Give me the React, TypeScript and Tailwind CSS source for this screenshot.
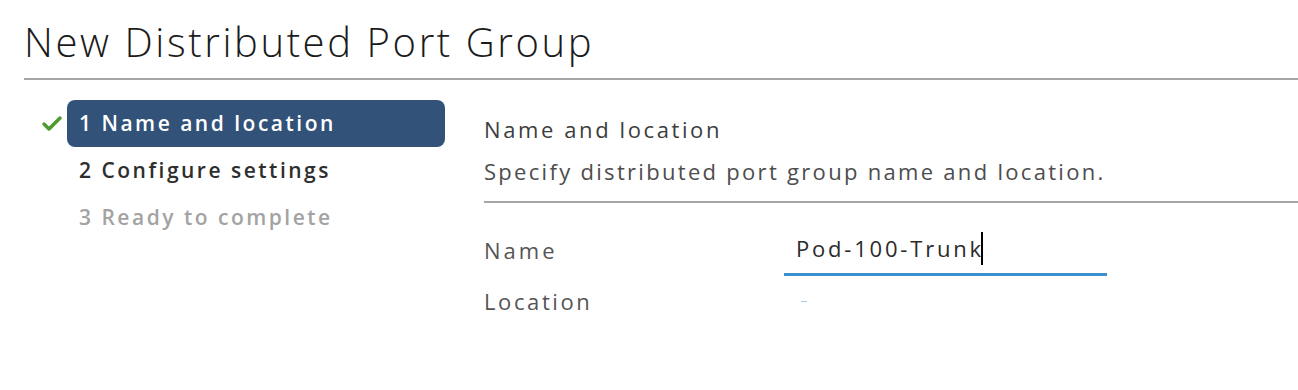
import { Check } from 'lucide-react'

const steps = [
  { label: '1 Name and location', state: 'active' },
  { label: '2 Configure settings', state: 'next' },
  { label: '3 Ready to complete', state: 'disabled' },
]

export default function App() {
  return (
    <div className="w-[1298px] h-[390px] bg-white overflow-hidden font-['Open_Sans',sans-serif]">
      <div className="ml-[24px] pt-[14px] border-b-2 border-[#a6a6a6]">
        <h1 className="text-[40px] leading-[56px] font-light tracking-[2.6px] text-[#1b1b1b] pb-[8px]">New Distributed Port Group</h1>
      </div>

      <div className="flex pt-[20px]">
        {/* wizard steps */}
        <div className="w-[484px] pl-[40px] pr-[39px]">
          {steps.map((s) => (
            <div key={s.label} className="flex items-center h-[47px]">
              <div className="w-[27px] shrink-0">
                {s.state === 'active' && <Check className="w-[24px] h-[24px] text-[#4e9a2e]" strokeWidth={3.5} />}
              </div>
              <div
                className={
                  s.state === 'active'
                    ? 'flex-1 h-[47px] flex items-center px-[12px] rounded-[8px] bg-[#325279] text-white text-[21px] tracking-[2.5px] font-semibold'
                    : s.state === 'next'
                      ? 'flex-1 h-[47px] flex items-center px-[12px] text-[#2e2e2e] text-[21px] tracking-[2.5px] font-semibold'
                      : 'flex-1 h-[47px] flex items-center px-[12px] text-[#a3a3a3] text-[21px] tracking-[2.5px] font-semibold'
                }
              >
                {s.label}
              </div>
            </div>
          ))}
        </div>

        {/* content */}
        <div className="flex-1 tracking-[2.6px]">
          <div className="pt-[14px] text-[22px] leading-[30px] font-medium text-[#3d3d3d]">Name and location</div>
          <div className="pt-[12px] text-[22px] leading-[30px] text-[#4d4d4d] tracking-[2.3px]">Specify distributed port group name and location.</div>
          <div className="mt-[15px] border-t-2 border-[#a6a6a6]" />
          <div className="grid grid-cols-[300px_323px] pt-[21px]">
            <div className="h-[52px] flex items-center text-[22px] text-[#555] tracking-[3px]">Name</div>
            <div className="h-[52px] flex items-center border-b-[3px] border-[#3c8fce] pl-[12px]">
              <span className="text-[22px] text-[#2b2b2b] tracking-[2.8px] -mr-[3px]">Pod-100-Trunk</span>
              <span className="w-[2px] h-[33px] bg-black" />
            </div>
            <div className="h-[50px] flex items-center text-[22px] text-[#555]">Location</div>
            <div className="h-[50px] flex items-center pl-[17px]">
              <span className="w-[6px] h-[1px] bg-[#a7c6e0]" />
            </div>
          </div>
        </div>
      </div>
    </div>
  )
}
